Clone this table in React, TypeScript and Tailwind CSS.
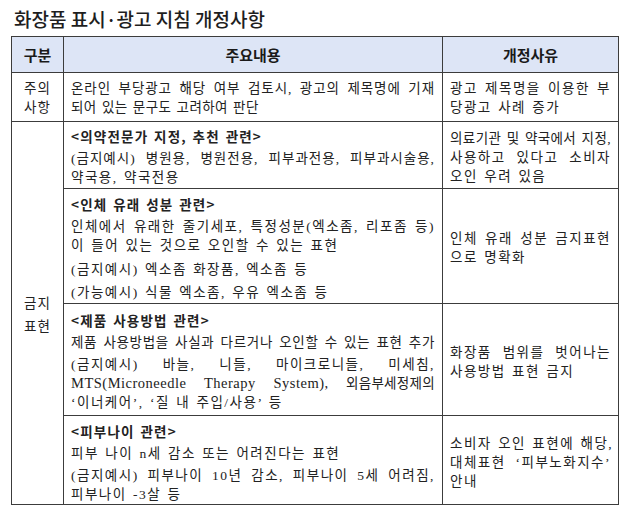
import React from "react";

const body = "font-['Liberation_Serif','Noto_Sans_CJK_KR',serif]";

function J({ children, className = "" }: { children: React.ReactNode; className?: string }) {
  return <div className={`text-justify [text-align-last:justify] whitespace-nowrap ${className}`}>{children}</div>;
}
function L({ children, className = "" }: { children: React.ReactNode; className?: string }) {
  return <div className={`text-left whitespace-nowrap ${className}`}>{children}</div>;
}
function P({ children, first }: { children: React.ReactNode; first?: boolean }) {
  return <div className={first ? "" : "mt-[3px]"}>{children}</div>;
}
function H({ children }: { children: React.ReactNode }) {
  return <div className="font-bold font-['Noto_Sans_CJK_KR',sans-serif] tracking-[1.2px]">{children}</div>;
}

export default function App() {
  const bd = "border border-[#3c3c3c]";
  const th = `${bd} text-[15px] font-bold font-['Noto_Sans_CJK_KR',sans-serif] text-center align-middle tracking-normal [word-spacing:0px] text-[#1a1a1a]`;
  return (
    <div className="w-[630px] h-[516px] bg-white text-[#222] overflow-hidden">
      <div className="pl-[14px] pt-[6px] h-[36px] text-[19px] font-medium leading-[26px] font-['Noto_Sans_CJK_KR',sans-serif] text-[#1e1e1e]">
        화장품 표시·광고 지침 개정사항
      </div>
      <table className={`ml-[11px] w-[607px] border-collapse table-fixed text-[13.5px] leading-[19px] tracking-[1.5px] [word-spacing:1.5px] ${body}`}>
        <colgroup>
          <col className="w-[52px]" />
          <col className="w-[379px]" />
          <col className="w-[176px]" />
        </colgroup>
        <tbody>
          <tr className="h-[36px] bg-[#dde5f6]">
            <th className={th}>구분</th>
            <th className={th}>주요내용</th>
            <th className={th}>개정사유</th>
          </tr>
          <tr className="h-[49px]">
            <td className={`${bd} text-center align-top pt-[6px] tracking-[1px]`}>
              <div>주의</div>
              <div>사항</div>
            </td>
            <td className={`${bd} align-top px-[7px] pt-[6px]`}>
              <J className="tracking-[0.9px] [word-spacing:0px]">온라인 부당광고 해당 여부 검토시, 광고의 제목명에 기재</J>
              <L className="tracking-[0.4px]">되어 있는 문구도 고려하여 판단</L>
            </td>
            <td className={`${bd} align-top px-[7px] pt-[6px]`}>
              <J>광고 제목명을 이용한 부</J>
              <L>당광고 사례 증가</L>
            </td>
          </tr>
          <tr className="h-[67px]">
            <td rowSpan={4} className={`${bd} text-center align-middle pt-[4px] tracking-[1px]`}>
              <div className="leading-[23px]">금지</div>
              <div className="leading-[23px]">표현</div>
            </td>
            <td className={`${bd} align-top px-[7px] pt-[5px]`}>
              <P first><H>&lt;의약전문가 지정, 추천 관련&gt;</H></P>
              <P>
                <J className="tracking-[1px] [word-spacing:0px]">(금지예시) 병원용, 병원전용, 피부과전용, 피부과시술용,</J>
                <L>약국용, 약국전용</L>
              </P>
            </td>
            <td className={`${bd} align-middle px-[7px] pt-[4px]`}>
              <J className="tracking-[0.4px] [word-spacing:0.5px]">의료기관 및 약국에서 지정,</J>
              <J>사용하고 있다고 소비자</J>
              <L>오인 우려 있음</L>
            </td>
          </tr>
          <tr className="h-[115px]">
            <td className={`${bd} align-top px-[7px] pt-[6px]`}>
              <P first><H>&lt;인체 유래 성분 관련&gt;</H></P>
              <P>
                <J>인체에서 유래한 줄기세포, 특정성분(엑소좀, 리포좀 등)</J>
                <L>이 들어 있는 것으로 오인할 수 있는 표현</L>
              </P>
              <div className="mt-[5px]"><L>(금지예시) 엑소좀 화장품, 엑소좀 등</L></div>
              <div className="mt-[4px]"><L>(가능예시) 식물 엑소좀, 우유 엑소좀 등</L></div>
            </td>
            <td className={`${bd} align-middle px-[7px] pt-[4px]`}>
              <J>인체 유래 성분 금지표현</J>
              <L>으로 명확화</L>
            </td>
          </tr>
          <tr className="h-[112px]">
            <td className={`${bd} align-top px-[7px] pt-[7px]`}>
              <P first><H>&lt;제품 사용방법 관련&gt;</H></P>
              <P><J className="tracking-[0.7px] [word-spacing:0.5px]">제품 사용방법을 사실과 다르거나 오인할 수 있는 표현 추가</J></P>
              <P>
                <J>(금지예시) 바늘, 니들, 마이크로니들, 미세침,</J>
                <J className="tracking-[0.3px] [word-spacing:0px]">
                  <span className="text-[14.5px] tracking-[0.5px]">MTS(Microneedle Therapy System),</span> 외음부세정제의
                </J>
                <L>‘이너케어’, ‘질 내 주입/사용’ 등</L>
              </P>
            </td>
            <td className={`${bd} align-middle px-[7px] pt-[4px]`}>
              <J>화장품 범위를 벗어나는</J>
              <L>사용방법 표현 금지</L>
            </td>
          </tr>
          <tr className="h-[89px]">
            <td className={`${bd} align-top px-[7px] pt-[6px]`}>
              <P first><H>&lt;피부나이 관련&gt;</H></P>
              <P><L>피부 나이 n세 감소 또는 어려진다는 표현</L></P>
              <P>
                <J>(금지예시) 피부나이 10년 감소, 피부나이 5세 어려짐,</J>
                <L>피부나이 -3살 등</L>
              </P>
            </td>
            <td className={`${bd} align-middle px-[7px] pt-[4px]`}>
              <J>소비자 오인 표현에 해당,</J>
              <J>대체표현 ‘피부노화지수’</J>
              <L>안내</L>
            </td>
          </tr>
        </tbody>
      </table>
    </div>
  );
}
